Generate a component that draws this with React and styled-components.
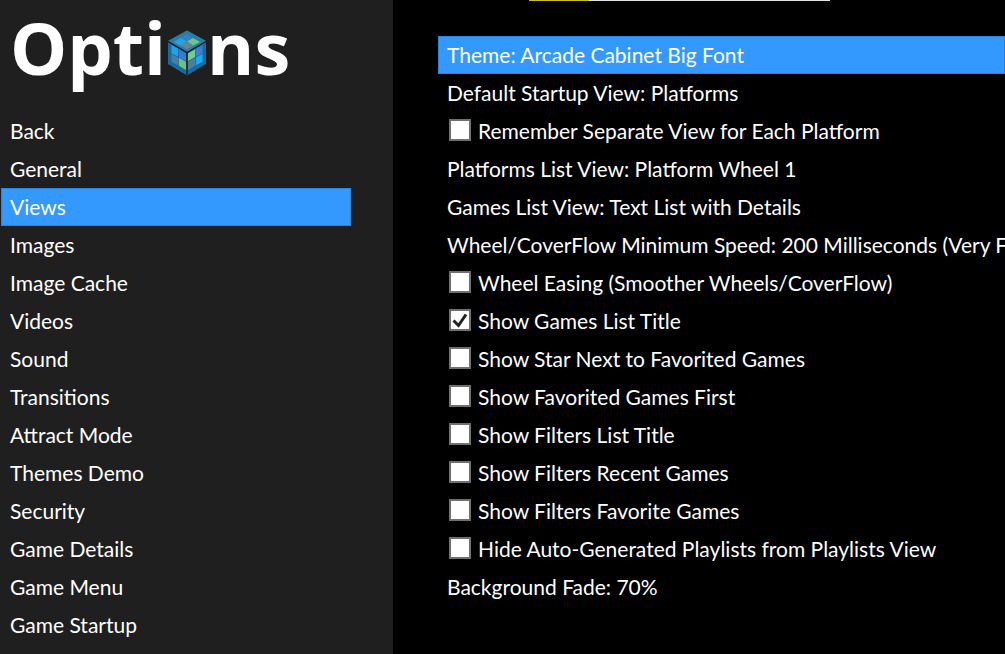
import React, { useState } from "react";
import styled, { createGlobalStyle } from "styled-components";

const GlobalStyle = createGlobalStyle`
    * {
        box-sizing: border-box;
    }

    body {
        margin: 0;
        background-color: #000;
        color: #fff;
        font-family: Lato, "Liberation Sans", sans-serif;
        font-size: 21px;
        line-height: 26px;
        overflow: hidden;
    }
`;

const Screen = styled.div`
    display: grid;
    grid-template-columns: 393px minmax(0, 1fr);
    min-height: 100vh;
`;

const Sidebar = styled.aside`
    background-color: #1f1f1f;
`;

const Title = styled.h1`
    display: flex;
    align-items: flex-start;
    margin: 0;
    padding-left: 10px;
    height: 112px;
    font-family: "Open Sans", sans-serif;
    font-size: 72px;
    font-weight: 700;
    line-height: 94px;
`;

const Cube = styled.svg`
    width: 41px;
    height: 46px;
    margin-top: 30px;
`;

const Menu = styled.nav`
    display: flex;
    flex-direction: column;
    padding: 0 42px 0 1px;
`;

const MenuItem = styled.button`
    height: 38px;
    padding: 0 8px;
    border: 1px solid ${({ $active }) => ($active ? "#2b84db" : "transparent")};
    background-color: ${({ $active }) => ($active ? "#3399ff" : "transparent")};
    color: inherit;
    font: inherit;
    text-align: left;
    white-space: nowrap;
`;

const Content = styled.main`
    padding-left: 45px;
    overflow: hidden;
`;

const Stripe = styled.div`
    width: 301px;
    height: 1px;
    margin: 0 0 35px 91px;
    border-left: 60px solid #cdbb27;
    background-color: #e4e4e4;
`;

const OptionList = styled.div`
    display: flex;
    flex-direction: column;
`;

const Option = styled(MenuItem)``;

const CheckOption = styled.label`
    display: flex;
    align-items: center;
    height: 38px;
    padding-left: 11px;
    white-space: nowrap;
`;

const BoxWrap = styled.span`
    display: grid;
    margin: 0 7px 2px 0;

    & > * {
        grid-area: 1 / 1;
    }
`;

const Box = styled.input`
    appearance: none;
    width: 22px;
    height: 22px;
    margin: 0;
    border: 2px solid #707070;
    background-color: #fff;
`;

const Tick = styled.svg`
    width: 22px;
    height: 22px;
    pointer-events: none;
`;

const menu = [
    "Back", "General", "Views", "Images", "Image Cache", "Videos", "Sound",
    "Transitions", "Attract Mode", "Themes Demo", "Security",
    "Game Details", "Game Menu", "Game Startup",
];

const options = [
    { text: "Theme: Arcade Cabinet Big Font", active: true },
    { text: "Default Startup View: Platforms" },
    { text: "Remember Separate View for Each Platform", check: true },
    { text: "Platforms List View: Platform Wheel 1" },
    { text: "Games List View: Text List with Details" },
    { text: "Wheel/CoverFlow Minimum Speed: 200 Milliseconds (Very Fast)" },
    { text: "Wheel Easing (Smoother Wheels/CoverFlow)", check: true },
    { text: "Show Games List Title", check: true, on: true },
    { text: "Show Star Next to Favorited Games", check: true },
    { text: "Show Favorited Games First", check: true },
    { text: "Show Filters List Title", check: true },
    { text: "Show Filters Recent Games", check: true },
    { text: "Show Filters Favorite Games", check: true },
    { text: "Hide Auto-Generated Playlists from Playlists View", check: true },
    { text: "Background Fade: 70%" },
];

const CubeLogo = () => (
    <Cube viewBox="0 0 41 46" aria-hidden="true">
        <path d="M21 0.5 40 11V34L21 45.5 2 34V11Z" fill="#196a9f" />
        <path d="M21 0.5 40 11 21 22 2 11Z" fill="#2a7f9e" />
        <path d="M21 4.5 27 8 21 11.5 14.5 8Z" fill="#3b7cc6" />
        <path d="M14.5 8 21 11.5 14.5 15.5 8 12Z" fill="#22a4ea" />
        <path d="M27 8 34 12 27.5 15.5 21 11.5Z" fill="#6cc58c" />
        <path d="M21 11.5 27.5 15.5 21 19.5 14.5 15.5Z" fill="#5f8795" />
        <path d="M5.5 15 12.5 19V27L5.5 23.5Z" fill="#18a5f2" />
        <path d="M12.5 19 20 23.5V31.5L12.5 27Z" fill="#3c78d5" />
        <path d="M5.5 23.5 12.5 27V35.5L5.5 32Z" fill="#477f9e" />
        <path d="M12.5 27 20 31.5V40L12.5 35.5Z" fill="#68c482" />
        <path d="M22 23.5 29.5 19V27L22 31.5Z" fill="#70cd8a" />
        <path d="M29.5 19 36.5 15V23.5L29.5 27Z" fill="#397fd3" />
        <path d="M22 31.5 29.5 27V35.5L22 40Z" fill="#4c7f9d" />
        <path d="M29.5 27 36.5 23.5V32L29.5 35.5Z" fill="#15acfb" />
        <path d="M5.5 23.5 20 31.5M12.5 19V35.5M22 31.5 36.5 23.5M29.5 19V35.5" fill="none" stroke="#145b86" strokeWidth="0.5" />
        <path d="M2 11.5 21 22.5 40 11.5M21 22V45" fill="none" stroke="#10181c" strokeWidth="1.3" />
        <path d="M21 24V40" stroke="#5b2a1c" strokeWidth="0.6" />
    </Cube>
);

const CheckRow = ({ text, on }) => {
    const [checked, setChecked] = useState(Boolean(on));

    return (
        <CheckOption>
            <BoxWrap>
                <Box type="checkbox" checked={checked} onChange={() => setChecked(!checked)} />
                {checked && (
                    <Tick viewBox="0 0 22 22" aria-hidden="true">
                        <path d="M4.5 11.5 9.5 16.5 17 5.5" fill="none" stroke="#212121" strokeWidth="3" />
                    </Tick>
                )}
            </BoxWrap>
            {text}
        </CheckOption>
    );
};

export default function App() {
    const [page, setPage] = useState("Views");

    return (
        <Screen>
            <GlobalStyle />
            <Sidebar>
                <Title>
                    <span>Opti</span>
                    <CubeLogo />
                    <span>ns</span>
                </Title>
                <Menu>
                    {menu.map((item) => (
                        <MenuItem key={item} type="button" $active={item === page} onClick={() => setPage(item)}>
                            {item}
                        </MenuItem>
                    ))}
                </Menu>
            </Sidebar>
            <Content>
                <Stripe />
                <OptionList>
                    {options.map(({ text, active, check, on }) => (
                        check
                            ? <CheckRow key={text} text={text} on={on} />
                            : <Option key={text} type="button" $active={active}>{text}</Option>
                    ))}
                </OptionList>
            </Content>
        </Screen>
    );
}
